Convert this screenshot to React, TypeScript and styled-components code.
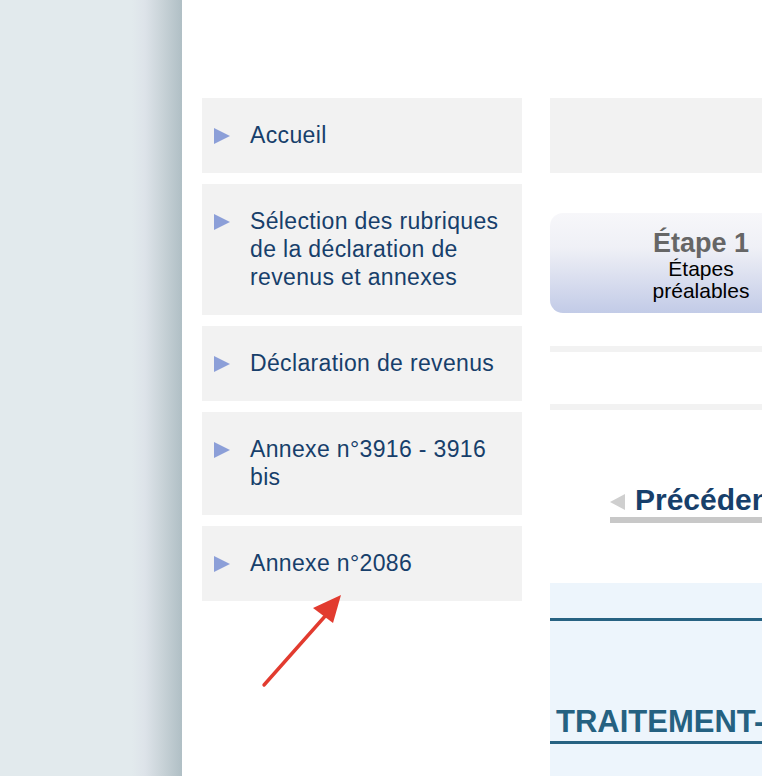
import React from 'react';
import styled, { createGlobalStyle } from 'styled-components';

const GlobalStyle = createGlobalStyle`
  html, body {
    margin: 0;
    padding: 0;
    background: #ffffff;
  }
  body {
    font-family: "Liberation Sans", Arial, Helvetica, sans-serif;
  }
`;

const menuItems = [
  'Accueil',
  'Sélection des rubriques de la déclaration de revenus et annexes',
  'Déclaration de revenus',
  'Annexe n°3916 - 3916 bis',
  'Annexe n°2086',
];

export default function App() {
  return (
    <>
      <GlobalStyle />
      <StyledPage>
        <StyledGutter />
        <StyledContent>
          <StyledMenu>
            {menuItems.map((label) => (
              <StyledMenuItem key={label}>
                <StyledBullet />
                <StyledMenuText>{label}</StyledMenuText>
              </StyledMenuItem>
            ))}
          </StyledMenu>

          <StyledMain>
            <StyledGreyBox />
            <StyledStepTab>
              <StyledStepTitle>Étape 1</StyledStepTitle>
              <StyledStepSub>
                Étapes
                <br />
                préalables
              </StyledStepSub>
            </StyledStepTab>
            <StyledBand $top={33} />
            <StyledBand $top={52} />
            <StyledPrevLink>
              <StyledPrevArrow />
              Précédent
            </StyledPrevLink>
            <StyledPanel>
              <StyledPanelRule />
              <StyledPanelTitle>TRAITEMENT-SALAIRES</StyledPanelTitle>
            </StyledPanel>
          </StyledMain>
        </StyledContent>

        <StyledArrow width="90" height="100" viewBox="0 0 90 100">
          <line x1="3" y1="91" x2="66" y2="20" stroke="#e23b2f" strokeWidth="3.4" strokeLinecap="round" />
          <polygon points="80,1 52,14 72,29" fill="#e23b2f" />
        </StyledArrow>
      </StyledPage>
    </>
  );
}

const StyledPage = styled.div`
  position: relative;
  display: flex;
  width: 762px;
  height: 776px;
  overflow: hidden;
  background: #ffffff;
`;

const StyledGutter = styled.div`
  flex: 0 0 182px;
  background: linear-gradient(
    to right,
    #e2eaed 0px,
    #e2eaed 132px,
    #dde3e9 145px,
    #c9d3d8 162px,
    #b0bfc5 182px
  );
`;

const StyledContent = styled.div`
  flex: 1 1 auto;
  display: flex;
  gap: 28px;
  padding: 98px 0 0 20px;
  background: radial-gradient(circle at 800px -30px, rgba(0, 0, 0, 0.12) 0px, rgba(0, 0, 0, 0) 70px), #ffffff;
  min-width: 0;
`;

const StyledMenu = styled.nav`
  flex: 0 0 320px;
  display: flex;
  flex-direction: column;
  gap: 11px;
`;

const StyledMenuItem = styled.div`
  display: flex;
  align-items: flex-start;
  gap: 20px;
  padding: 23px 12px 24px 12px;
  background: #f2f2f2;
`;

const StyledBullet = styled.span`
  flex: 0 0 16px;
  height: 28px;
  position: relative;

  &::before {
    content: '';
    position: absolute;
    left: 0;
    top: 7px;
    border-top: 8px solid transparent;
    border-bottom: 8px solid transparent;
    border-left: 16px solid #8c9fd8;
  }
`;

const StyledMenuText = styled.span`
  font-size: 23px;
  letter-spacing: 0.35px;
  line-height: 28px;
  color: #173f6b;
`;

const StyledMain = styled.div`
  flex: 0 0 320px;
  display: flex;
  flex-direction: column;
`;

const StyledGreyBox = styled.div`
  height: 75px;
  background: #f2f2f2;
`;

const StyledStepTab = styled.div`
  margin-top: 40px;
  width: 302px;
  height: 100px;
  box-sizing: border-box;
  border-radius: 13px 0 0 13px;
  background: linear-gradient(to bottom, #f7f7fa 0%, #eff0f6 35%, #d7dcee 70%, #c2cbe7 100%);
  display: flex;
  flex-direction: column;
  align-items: center;
  padding-top: 16px;
  text-align: center;
`;

const StyledStepTitle = styled.div`
  font-size: 27px;
  font-weight: bold;
  line-height: 29px;
  color: #666666;
`;

const StyledStepSub = styled.div`
  font-size: 21px;
  line-height: 22px;
  color: #000000;
`;

const StyledBand = styled.div<{ $top: number }>`
  margin-top: ${(p) => p.$top}px;
  height: 6px;
  background: #f2f2f2;
`;

const StyledPrevLink = styled.div`
  margin: 73px 0 0 60px;
  display: flex;
  align-items: center;
  gap: 10px;
  font-size: 30px;
  font-weight: bold;
  line-height: 34px;
  color: #173f6b;
  white-space: nowrap;
  border-bottom: 6px solid #c8c8c8;
`;

const StyledPrevArrow = styled.span`
  width: 0;
  height: 0;
  margin-top: 4px;
  border-top: 8px solid transparent;
  border-bottom: 8px solid transparent;
  border-right: 15px solid #cfcfcf;
`;

const StyledPanel = styled.div`
  margin-top: 60px;
  flex: 1 1 auto;
  background: #edf5fc;
  padding-top: 35px;
`;

const StyledPanelRule = styled.div`
  height: 3px;
  background: #276282;
`;

const StyledPanelTitle = styled.div`
  margin-top: 84px;
  padding-left: 6px;
  font-size: 31px;
  font-weight: bold;
  line-height: 34px;
  color: #256181;
  white-space: nowrap;
  padding-bottom: 2px;
  border-bottom: 3px solid #276282;
`;

const StyledArrow = styled.svg`
  position: absolute;
  left: 261px;
  top: 594px;
  overflow: visible;
`;
